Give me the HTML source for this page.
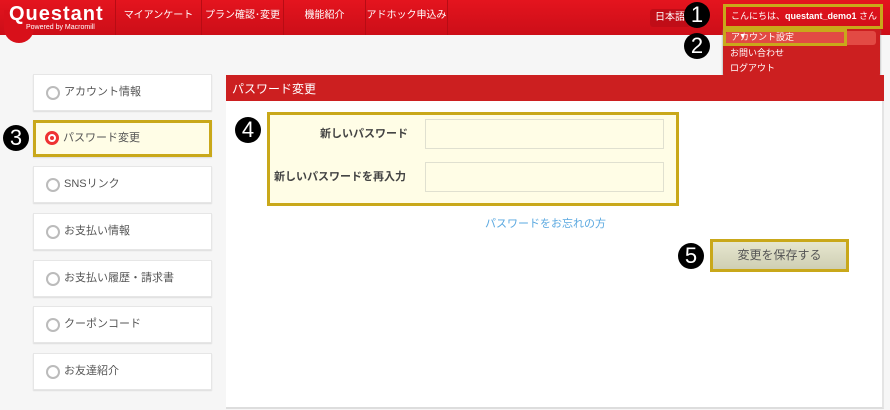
<!DOCTYPE html>
<html><head><meta charset="utf-8"><style>
*{box-sizing:border-box;margin:0;padding:0}
body{width:890px;height:410px;background:#f6f6f6;font-family:"Liberation Sans","Noto Sans CJK JP",sans-serif;position:relative;overflow:hidden;font-size:11px;color:#444}
.abs{position:absolute}
.hdr{left:0;top:0;width:890px;height:35px;background:linear-gradient(#e4141e,#cc0e18)}
.nav{top:0;height:35px;line-height:32px;color:#fff;font-size:10px;text-align:center;border-left:1px solid #b80c14}
.badge{width:26px;height:26px;border-radius:50%;background:#000;color:#fff;font-size:22px;line-height:26px;text-align:center;font-family:"Liberation Sans",sans-serif}
.side{left:33px;width:179px;height:37px;background:#fff;border:1px solid #e6e6e6;box-shadow:0 1px 1px #ddd;line-height:35px;padding-left:30px;font-size:11px;color:#555}
.side.r:before{content:"";position:absolute;left:12px;top:11px;width:14px;height:14px;border-radius:50%;border:2px solid #bbb;box-sizing:border-box}
.inp{background:#fffde6;border:1px solid #e0e0d0;height:30px;width:239px;left:425px}
</style></head><body>
<div class="abs hdr"></div>
<div class="abs" style="left:4px;top:10px;width:30px;height:33px;border-radius:0 0 15px 15px;background:#d8101a"></div>
<div class="abs" style="left:9px;top:3px;color:#fff;font-size:20px;font-weight:bold;letter-spacing:1px">Questant</div>
<div class="abs" style="left:26px;top:24px;color:#fff;font-size:7px">Powered by Macromill</div>
<div class="abs nav" style="left:115px;width:86px">マイアンケート</div>
<div class="abs nav" style="left:201px;width:82px">プラン確認･変更</div>
<div class="abs nav" style="left:283px;width:82px">機能紹介</div>
<div class="abs nav" style="left:365px;width:82px">アドホック申込み</div>
<div class="abs nav" style="left:447px;width:1px"></div>
<div class="abs" style="left:650px;top:9px;width:40px;height:18px;background:#c00d17;border-radius:3px;color:#fff;font-size:10px;line-height:18px;padding-left:5px">日本語</div>
<div class="abs" style="left:723px;top:29px;width:157px;height:49px;background:#cc1f20;border-radius:0 0 4px 4px;box-shadow:0 1px 2px #888"></div>
<div class="abs" style="left:726px;top:31px;width:150px;height:14px;background:#e24a44;border-radius:3px"></div>
<div class="abs" style="left:723px;top:4px;width:160px;height:25px;border:3px solid #c9a81a;color:#fff;font-size:9px;line-height:19px;padding-left:5px">こんにちは、<b>questant_demo1</b> さん <span style="margin-left:8px;font-size:7px">▼</span></div>
<div class="abs" style="left:723px;top:29px;width:124px;height:17px;border:3px solid #c9a81a;color:#fff;font-size:9px;line-height:11px;padding-left:5px">アカウント設定</div>
<div class="abs" style="left:730px;top:46px;color:#fff;font-size:9px">お問い合わせ</div>
<div class="abs" style="left:730px;top:61px;color:#fff;font-size:9px">ログアウト</div>
<div class="abs badge" style="left:684px;top:2px">1</div>
<div class="abs badge" style="left:684px;top:33px">2</div>

<div class="abs" style="left:226px;top:75px;width:658px;height:334px;background:#fff;border-right:2px solid #e4e4e4;border-bottom:2px solid #ddd"></div>
<div class="abs" style="left:226px;top:75px;width:658px;height:26px;background:#cc1f20;color:#fff;font-size:12px;line-height:28px;padding-left:6px">パスワード変更</div>

<div class="abs side r" style="top:74px">アカウント情報</div>
<div class="abs side" style="top:120px;background:#fffde6;border:3px solid #c9a81a;line-height:31px;padding-left:27px">パスワード変更</div>
<div class="abs" style="left:45px;top:131px;width:14px;height:14px;border-radius:50%;border:3px solid #e33;background:#fff"><div style="width:4px;height:4px;margin:2px;background:#e33;border-radius:50%"></div></div>
<div class="abs side r" style="top:166px">SNSリンク</div>
<div class="abs side r" style="top:213px">お支払い情報</div>
<div class="abs side r" style="top:260px">お支払い履歴・請求書</div>
<div class="abs side r" style="top:306px">クーポンコード</div>
<div class="abs side r" style="top:353px">お友達紹介</div>
<div class="abs badge" style="left:3px;top:125px">3</div>

<div class="abs" style="left:267px;top:112px;width:412px;height:94px;background:#fffde6;border:3px solid #c9a81a"></div>
<div class="abs" style="left:320px;top:125px;font-size:11px;font-weight:bold;color:#444">新しいパスワード</div>
<div class="abs" style="left:274px;top:168px;font-size:11px;font-weight:bold;color:#444">新しいパスワードを再入力</div>
<div class="abs inp" style="top:119px"></div>
<div class="abs inp" style="top:162px"></div>
<div class="abs badge" style="left:235px;top:117px">4</div>
<div class="abs" style="left:485px;top:215px;color:#5aa8e0;font-size:11px">パスワードをお忘れの方</div>

<div class="abs" style="left:710px;top:239px;width:139px;height:33px;border:3px solid #c9a81a;background:linear-gradient(#e6e6cf,#cfcfb4);text-align:center;line-height:27px;font-size:12px;color:#555">変更を保存する</div>
<div class="abs badge" style="left:678px;top:243px">5</div>
</body></html>
